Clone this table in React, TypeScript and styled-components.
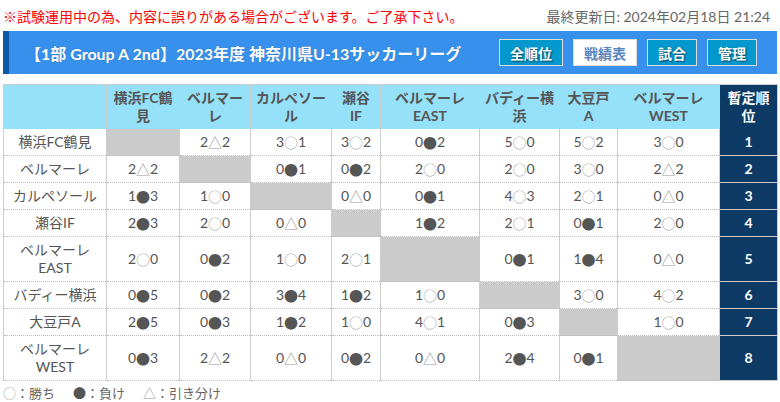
import React from "react";
import styled, { createGlobalStyle } from "styled-components";

const GlobalStyle = createGlobalStyle`
    body {
        margin: 0;
        font-family: Lato, "Noto Sans CJK JP", sans-serif;
        color: #555;
        background: #fff;
    }
`;

type Team = { name: string; head: string; rank: number; results: string[] };

const teams: Team[] = [
    { name: "横浜FC鶴見", head: "横浜FC鶴\n見", rank: 1, results: ["", "2△2", "3○1", "3○2", "0●2", "5○0", "5○2", "3○0"] },
    { name: "ベルマーレ", head: "ベルマー\nレ", rank: 2, results: ["2△2", "", "0●1", "0●2", "2○0", "2○0", "3○0", "2△2"] },
    { name: "カルペソール", head: "カルペソー\nル", rank: 3, results: ["1●3", "1○0", "", "0△0", "0●1", "4○3", "2○1", "0△0"] },
    { name: "瀬谷IF", head: "瀬谷\nIF", rank: 4, results: ["2●3", "2○0", "0△0", "", "1●2", "2○1", "0●1", "2○0"] },
    { name: "ベルマーレ\nEAST", head: "ベルマーレ\nEAST", rank: 5, results: ["2○0", "0●2", "1○0", "2○1", "", "0●1", "1●4", "0△0"] },
    { name: "バディー横浜", head: "バディー横\n浜", rank: 6, results: ["0●5", "0●2", "3●4", "1●2", "1○0", "", "3○0", "4○2"] },
    { name: "大豆戸A", head: "大豆戸\nA", rank: 7, results: ["2●5", "0●3", "1●2", "1○0", "4○1", "0●3", "", "1○0"] },
    { name: "ベルマーレ\nWEST", head: "ベルマーレ\nWEST", rank: 8, results: ["0●3", "2△2", "0△0", "0●2", "0△0", "2●4", "0●1", ""] },
];

const colWidths = [103, 73, 71, 81, 49, 99, 80, 58, 102, 58];

const Lines = ({ text }: { text: string }) => (
    <>
        {text.split("\n").map((line, i) => (
            <React.Fragment key={i}>
                {i > 0 && <br />}
                {line}
            </React.Fragment>
        ))}
    </>
);

const Score = ({ value }: { value: string }) => {
    const mark = value[1];
    return (
        <>
            {value[0]}
            <Mark $mark={mark}>{mark}</Mark>
            {value[2]}
        </>
    );
};

export default function App() {
    return (
        <Page>
            <GlobalStyle />
            <TopBar>
                <Notice>※試験運用中の為、内容に誤りがある場合がございます。ご了承下さい。</Notice>
                <Updated>最終更新日: 2024年02月18日 21:24</Updated>
            </TopBar>

            <TitleBar>
                <Title>【1部 Group A 2nd】2023年度 神奈川県U-13サッカーリーグ</Title>
                <NavList>
                    <NavButton>全順位</NavButton>
                    <NavButton $active>戦績表</NavButton>
                    <NavButton>試合</NavButton>
                    <NavButton>管理</NavButton>
                </NavList>
            </TitleBar>

            <Table>
                <colgroup>
                    {colWidths.map((w, i) => (
                        <col key={i} style={{ width: w }} />
                    ))}
                </colgroup>
                <thead>
                    <tr>
                        <HeadCell />
                        {teams.map((t) => (
                            <HeadCell key={t.name}>
                                <Lines text={t.head} />
                            </HeadCell>
                        ))}
                        <RankHead>
                            暫定順
                            <br />
                            位
                        </RankHead>
                    </tr>
                </thead>
                <tbody>
                    {teams.map((t, r) => (
                        <Row key={t.name}>
                            <TeamCell>
                                <Lines text={t.name} />
                            </TeamCell>
                            {t.results.map((res, c) => (
                                <ScoreCell key={c} $self={r === c}>
                                    {res && <Score value={res} />}
                                </ScoreCell>
                            ))}
                            <RankCell>{t.rank}</RankCell>
                        </Row>
                    ))}
                </tbody>
            </Table>

            <Legend>
                <LegendItem>
                    <Mark $mark="○">○</Mark>：勝ち
                </LegendItem>
                <LegendItem>
                    <Mark $mark="●">●</Mark>：負け
                </LegendItem>
                <LegendItem>
                    <Mark $mark="△">△</Mark>：引き分け
                </LegendItem>
            </Legend>
        </Page>
    );
}

const Page = styled.div`
    padding: 0 3px;
    width: 774px;
`;

const TopBar = styled.div`
    display: flex;
    justify-content: space-between;
    align-items: center;
    height: 31px;
    font-size: 14px;
`;

const Notice = styled.p`
    margin: 0;
    color: #f00;
`;

const Updated = styled.p`
    margin: 0;
    padding-right: 7px;
    color: #666;
`;

const TitleBar = styled.div`
    display: flex;
    align-items: center;
    justify-content: space-between;
    height: 43px;
    box-sizing: border-box;
    padding: 0 20px 0 16px;
    background: #3790eb;
    border-left: 6px solid #0b5aa9;
`;

const Title = styled.h1`
    margin: 0;
    font-size: 16px;
    font-weight: bold;
    color: #fff;
    text-shadow: 0 0 1px rgba(0, 0, 0, 0.3);
`;

const NavList = styled.div`
    display: flex;
    gap: 10px;
`;

const NavButton = styled.span<{ $active?: boolean }>`
    display: flex;
    align-items: center;
    justify-content: center;
    height: 27px;
    box-sizing: border-box;
    padding: 0 10px;
    font-size: 14px;
    font-weight: bold;
    border: 1px solid #ddd;
    background: ${(p) => (p.$active ? "#fff" : "#0399ce")};
    color: ${(p) => (p.$active ? "#5a86c0" : "#fff")};
    text-shadow: ${(p) => (p.$active ? "none" : "1px 1px 2px rgba(0, 0, 0, 0.6)")};
`;

const Table = styled.table`
    margin-top: 10px;
    width: 774px;
    table-layout: fixed;
    border-collapse: collapse;
    font-size: 14px;
    line-height: 18px;
    text-align: center;
`;

const Cell = styled.td`
    padding: 4px 2px;
    border-left: 1px solid #ccc;
    border-right: 1px solid #ccc;
    vertical-align: middle;
    height: 18px;
`;

const HeadCell = styled(Cell).attrs({ as: "th" })`
    background: #95e1f9;
    border-top: 1px solid #ccc;
    font-weight: bold;
    color: #555;
`;

const RankHead = styled(HeadCell)`
    background: #0e3a66;
    color: #fff;
`;

const Row = styled.tr`
    border-bottom: 1px dotted #bbb;
`;

const TeamCell = styled(Cell)`
    color: #555;
`;

const ScoreCell = styled(Cell)<{ $self: boolean }>`
    background: ${(p) => (p.$self ? "#cbcbcb" : "#fff")};
    color: #555;
    white-space: nowrap;
`;

const RankCell = styled(Cell)`
    background: #0e3a66;
    color: #fff;
    font-weight: bold;
    border-bottom: 1px solid #ccc;
`;

const Mark = styled.span<{ $mark: string }>`
    display: inline-block;
    vertical-align: top;
    line-height: 18px;
    font-family: "Noto Sans CJK JP", sans-serif;
    color: ${(p) => (p.$mark === "●" ? "#555" : p.$mark === "○" ? "#aaa" : "#999")};
`;

const Legend = styled.div`
    display: flex;
    gap: 18px;
    margin-top: 3px;
    font-size: 13px;
    line-height: 18px;
    color: #666;
`;

const LegendItem = styled.span``;
